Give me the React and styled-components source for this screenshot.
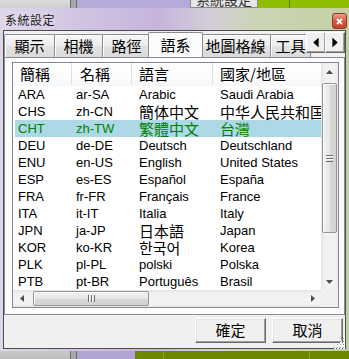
import React from 'react';
import styled, { createGlobalStyle } from 'styled-components';

const GlobalStyle = createGlobalStyle`
  html, body { margin: 0; padding: 0; }
  body {
    width: 349px;
    height: 359px;
    overflow: hidden;
    background: #d6d6d6;
    font-family: "Liberation Sans", Arial, "Noto Sans CJK TC", sans-serif;
    font-size: 13px;
    color: #000;
  }
`;

const CJK_RE = /[\u3000-\u9fff\uac00-\ud7af\uff00-\uffef]/;

const tabs = [
  { label: '顯示', w: 51 },
  { label: '相機', w: 49 },
  { label: '路徑', w: 49 },
  { label: '語系', w: 51, active: true },
  { label: '地圖格線', w: 71 },
  { label: '工具', w: 41 },
];

const headCols = [
  { label: '簡稱', w: 59, pad: 7 },
  { label: '名稱', w: 60, pad: 8 },
  { label: '語言', w: 81, pad: 7 },
  { label: '國家/地區', w: 130, pad: 7 },
];

const rowCols = [
  { w: 57, pad: 3 },
  { w: 60, pad: 4 },
  { w: 81, pad: 7 },
  { w: 130, pad: 7 },
];

const languages = [
  ['ARA', 'ar-SA', 'Arabic', 'Saudi Arabia'],
  ['CHS', 'zh-CN', '簡体中文', '中华人民共和国'],
  ['CHT', 'zh-TW', '繁體中文', '台灣'],
  ['DEU', 'de-DE', 'Deutsch', 'Deutschland'],
  ['ENU', 'en-US', 'English', 'United States'],
  ['ESP', 'es-ES', 'Español', 'España'],
  ['FRA', 'fr-FR', 'Français', 'France'],
  ['ITA', 'it-IT', 'Italia', 'Italy'],
  ['JPN', 'ja-JP', '日本語', 'Japan'],
  ['KOR', 'ko-KR', '한국어', 'Korea'],
  ['PLK', 'pl-PL', 'polski', 'Polska'],
  ['PTB', 'pt-BR', 'Português', 'Brasil'],
];

const Arrow = ({ dir }) => {
  const pts = {
    up: '0,4 3.5,0 7,4',
    down: '0,0 3.5,4 7,0',
    left: '4,0 0,3.5 4,7',
    right: '0,0 4,3.5 0,7',
  }[dir];
  const vertical = dir === 'up' || dir === 'down';
  return (
    <svg width={vertical ? 7 : 4} height={vertical ? 4 : 7} viewBox={vertical ? '0 0 7 4' : '0 0 4 7'}>
      <polygon points={pts} fill="#4d4d4d" />
    </svg>
  );
};

const Txt = ({ children }) => <Label $cjk={CJK_RE.test(children)}>{children}</Label>;

export default function App() {
  return (
    <>
      <GlobalStyle />
      <Page>
        <Strip $h={8}>
          <Seg $w={70} $bg="linear-gradient(#dcdcdc, #cfcfcf)" />
          <Splitter />
          <Seg $w={113} $bg="#b7a9d9" />
          <BehindButton><span>系統設定</span></BehindButton>
          <Seg $w={31} $bg="#8fbd00" />
          <Seg $bg="#8fbd00" $edge="#5d7a00" />
        </Strip>

        <Window>
          <TitleBar>
            <Title>系統設定</Title>
            <CloseBtn>
              <svg width="7" height="7" viewBox="0 0 7 7">
                <path d="M1 1 L6 6 M6 1 L1 6" stroke="#fff" strokeWidth="1.8" />
              </svg>
            </CloseBtn>
          </TitleBar>

          <Client>
            <TabControl>
              <TabRow>
                {tabs.map((t) => (
                  <Tab key={t.label} $w={t.w} $active={t.active}>
                    {t.label}
                  </Tab>
                ))}
                <Scroller>
                  <ScrollerBtn><Arrow dir="left" /></ScrollerBtn>
                  <ScrollerBtn><Arrow dir="right" /></ScrollerBtn>
                </Scroller>
              </TabRow>

              <Panel>
                <ListView>
                  <ListContent>
                    <Header>
                      {headCols.map((c) => (
                        <HeadCell key={c.label} $w={c.w} $pad={c.pad}>{c.label}</HeadCell>
                      ))}
                    </Header>
                    {languages.map((row) => (
                      <Row key={row[0]} $selected={row[0] === 'CHT'}>
                        {row.map((val, i) => (
                          <Cell key={i} $w={rowCols[i].w} $pad={rowCols[i].pad}>
                            <Txt>{val}</Txt>
                          </Cell>
                        ))}
                      </Row>
                    ))}
                  </ListContent>

                  <VScroll>
                    <ArrowBox><Arrow dir="up" /></ArrowBox>
                    <VThumb><Grip $vertical /></VThumb>
                    <Spacer />
                    <ArrowBox><Arrow dir="down" /></ArrowBox>
                  </VScroll>

                  <HScroll>
                    <ArrowBox><Arrow dir="left" /></ArrowBox>
                    <HThumb><Grip /></HThumb>
                    <Spacer />
                    <ArrowBox><Arrow dir="right" /></ArrowBox>
                  </HScroll>
                  <Corner />
                </ListView>
              </Panel>
            </TabControl>

            <Footer>
              <DlgButton>確定</DlgButton>
              <DlgButton>取消</DlgButton>
            </Footer>

            <SizeGrip>
              <svg width="11" height="11" viewBox="0 0 11 11">
                {[[9, 1], [9, 4], [6, 4], [9, 7], [6, 7], [3, 7], [9, 10], [6, 10], [3, 10], [0, 10]].map(([x, y]) => (
                  <g key={`${x}-${y}`}>
                    <rect x={x} y={y - 1} width="2" height="2" fill="#ffffff" />
                    <rect x={x} y={y - 1} width="1" height="1" fill="#9a9a9a" />
                  </g>
                ))}
              </svg>
            </SizeGrip>
          </Client>
        </Window>

        <Strip $h={8}>
          <Seg $w={70} $bg="linear-gradient(#c9c9c9, #bdbdbd)" />
          <Splitter />
          <Seg $w={58} $bg="#b3a4d6" />
          <Seg $w={28} $bg="#6b8800" />
          <Seg $w={145} $bg="#6b8800" $edge="#8aa520" />
          <Seg $bg="#6b8800" $edge="#8aa520" />
        </Strip>
      </Page>
    </>
  );
}

const Page = styled.div`
  width: 349px;
  height: 359px;
  display: flex;
  flex-direction: column;
`;

const Strip = styled.div`
  display: flex;
  height: ${(p) => p.$h}px;
  flex: none;
`;

const Seg = styled.div`
  width: ${(p) => (p.$w ? `${p.$w}px` : 'auto')};
  flex: ${(p) => (p.$w ? 'none' : 1)};
  background: ${(p) => p.$bg};
  border-left: ${(p) => (p.$edge ? `1px solid ${p.$edge}` : 'none')};
`;

const Splitter = styled.div`
  width: 5px;
  flex: none;
  background: #a8a8a8;
  border-left: 1px solid #6c6c6c;
  border-right: 1px solid #6c6c6c;
`;

const BehindButton = styled.div`
  width: 66px;
  flex: none;
  background: #e6e6e6;
  border-left: 1px solid #8a8a8a;
  border-right: 1px solid #8a8a8a;
  border-bottom: 1px solid #8a8a8a;
  overflow: hidden;
  display: flex;
  align-items: flex-end;
  justify-content: center;

  span {
    font-size: 14px;
    line-height: 14px;
    color: #333;
  }
`;

const Window = styled.div`
  height: 343px;
  flex: none;
  display: flex;
  flex-direction: column;
  background: linear-gradient(90deg, #ddd6e8 0%, #d2c5e2 22%, #c6b4dd 45%, #d3cdd8 60%, #ccd5b4 74%, #c3d0a2 100%);
`;

const TitleBar = styled.div`
  height: 22px;
  flex: none;
  display: flex;
  align-items: center;
  justify-content: space-between;
  padding: 0 2px 0 5px;
`;

const Title = styled.div`
  font-size: 12px;
  color: #1a1a1a;
  letter-spacing: 0.5px;
  text-shadow: 0 0 6px rgba(255, 255, 255, 0.9);
  margin-top: 1px;
`;

const CloseBtn = styled.div`
  align-self: flex-end;
  margin-bottom: 1px;
  width: 15px;
  height: 16px;
  box-sizing: border-box;
  border: 1px solid #8c3a2c;
  border-radius: 3px;
  background: linear-gradient(#eaa08e, #d65a40 50%, #c8402a);
  display: flex;
  align-items: center;
  justify-content: center;
`;

const Client = styled.div`
  flex: 1;
  margin: 0 3px 2px 3px;
  border: 1px solid #4d4d4d;
  background: #f0f0f0;
  position: relative;
  display: flex;
  flex-direction: column;
`;

const TabControl = styled.div`
  display: flex;
  flex-direction: column;
`;

const TabRow = styled.div`
  position: relative;
  height: 26px;
  display: flex;
  align-items: flex-end;
  overflow: hidden;
  flex: none;
`;

const Label = styled.span`
  display: inline-block;
  height: 17px;
  line-height: 17px;
  vertical-align: top;
  font-size: ${(p) => (p.$cjk ? '15px' : '13px')};
  font-family: ${(p) => (p.$cjk ? '"Noto Sans CJK TC", sans-serif' : 'inherit')};
`;

const Tab = styled.div`
  flex: none;
  box-sizing: border-box;
  width: ${(p) => p.$w + (p.$active ? 4 : 0)}px;
  height: ${(p) => (p.$active ? 26 : 23)}px;
  margin: 0 ${(p) => (p.$active ? -3 : -1)}px ${(p) => (p.$active ? -1 : 0)}px ${(p) => (p.$active ? -2 : 0)}px;
  position: relative;
  z-index: ${(p) => (p.$active ? 2 : 1)};
  border: 1px solid #898c95;
  border-bottom: none;
  border-radius: 2px 2px 0 0;
  background: ${(p) =>
    p.$active ? '#fcfcfc' : 'linear-gradient(#f6f6f6, #ececec 50%, #e2e2e2 51%, #dadada)'};
  box-shadow: inset 1px 1px 0 #ffffff;
  font-family: "Noto Sans CJK TC", sans-serif;
  font-size: 15px;
  line-height: 20px;
  padding-top: ${(p) => (p.$active ? 2 : 1)}px;
  text-align: center;
  white-space: nowrap;
  overflow: hidden;
`;

const Scroller = styled.div`
  position: absolute;
  right: 0;
  top: 1px;
  display: flex;
  z-index: 3;
`;

const ScrollerBtn = styled.div`
  width: 20px;
  height: 21px;
  box-sizing: border-box;
  margin-left: -1px;
  background: #f0f0f0;
  border: 1px solid;
  border-color: #ffffff #6a6a6a #6a6a6a #ffffff;
  box-shadow: inset -1px -1px 0 #a0a0a0;
  display: flex;
  align-items: center;
  justify-content: center;

  svg { transform: scale(1.4); }
  polygon { fill: #000; }
`;

const Panel = styled.div`
  height: 258px;
  box-sizing: border-box;
  border: 1px solid #898c95;
  background: #fcfcfc;
  padding: 4px 0 0 7px;
`;

const ListView = styled.div`
  width: 327px;
  height: 246px;
  box-sizing: border-box;
  border: 1px solid #828790;
  background: #ffffff;
  display: grid;
  grid-template-columns: 308px 17px;
  grid-template-rows: 227px 17px;
`;

const ListContent = styled.div`
  overflow: hidden;
  white-space: nowrap;
`;

const Header = styled.div`
  display: flex;
  height: 23px;
  background: linear-gradient(#ffffff, #fdfdfd 60%, #f6f7f9);
`;

const HeadCell = styled.div`
  flex: none;
  box-sizing: border-box;
  width: ${(p) => p.$w}px;
  padding-left: ${(p) => p.$pad}px;
  border-right: 1px solid #dcdfe4;
  height: 21px;
  font-family: "Noto Sans CJK TC", sans-serif;
  font-size: 15px;
  line-height: 22px;
  color: #000;
`;

const Row = styled.div`
  display: flex;
  height: 17px;
  line-height: 17px;
  margin-left: 2px;
  width: 306px;
  background: ${(p) => (p.$selected ? '#add8e6' : 'transparent')};
  color: ${(p) => (p.$selected ? '#008000' : '#000')};
`;

const Cell = styled.div`
  flex: none;
  box-sizing: border-box;
  width: ${(p) => p.$w}px;
  padding-left: ${(p) => p.$pad}px;
  overflow: visible;
`;

const ScrollTrack = styled.div`
  display: flex;
  background: #ebebeb;
`;

const VScroll = styled(ScrollTrack)`
  flex-direction: column;
  background: linear-gradient(90deg, #e3e3e3, #f0f0f0 20%, #f3f3f3 80%, #e8e8e8);
`;

const HScroll = styled(ScrollTrack)`
  background: linear-gradient(#e3e3e3, #f0f0f0 20%, #f3f3f3 80%, #e8e8e8);
`;

const Corner = styled.div`
  background: #f0f0f0;
`;

const ArrowBox = styled.div`
  width: 17px;
  height: 17px;
  flex: none;
  display: flex;
  align-items: center;
  justify-content: center;
`;

const Spacer = styled.div`
  flex: 1;
`;

const VThumb = styled.div`
  margin: 3px 1px 0 1px;
  height: 150px;
  box-sizing: border-box;
  border: 1px solid #979797;
  border-radius: 2px;
  background: linear-gradient(90deg, #f2f2f2, #e6e6e6 50%, #d8d8d8 51%, #d2d2d2);
  box-shadow: inset 1px 1px 0 #fbfbfb;
  display: flex;
  align-items: center;
  justify-content: center;
`;

const HThumb = styled.div`
  margin: 1px 0 1px 3px;
  width: 116px;
  box-sizing: border-box;
  border: 1px solid #979797;
  border-radius: 2px;
  background: linear-gradient(#f2f2f2, #e6e6e6 50%, #d8d8d8 51%, #d2d2d2);
  box-shadow: inset 1px 1px 0 #fbfbfb;
  display: flex;
  align-items: center;
  justify-content: center;
`;

const Grip = styled.div`
  width: 7px;
  height: 7px;
  background: ${(p) =>
    p.$vertical
      ? 'repeating-linear-gradient(#6f6f6f 0 1px, #f8f8f8 1px 2px, transparent 2px 3px)'
      : 'repeating-linear-gradient(90deg, #6f6f6f 0 1px, #f8f8f8 1px 2px, transparent 2px 3px)'};
`;

const Footer = styled.div`
  display: flex;
  justify-content: flex-end;
  gap: 6px;
  padding: 3px 2px 0 0;
`;

const DlgButton = styled.div`
  width: 71px;
  height: 25px;
  box-sizing: border-box;
  background: #f0f0f0;
  border: 1px solid;
  border-color: #ffffff #696969 #696969 #ffffff;
  box-shadow: inset -1px -1px 0 #a0a0a0, inset 1px 1px 0 #e3e3e3;
  font-family: "Noto Sans CJK TC", sans-serif;
  font-size: 15px;
  line-height: 22px;
  text-align: center;
`;

const SizeGrip = styled.div`
  position: absolute;
  right: 0;
  bottom: 0;
  width: 11px;
  height: 11px;
`;
